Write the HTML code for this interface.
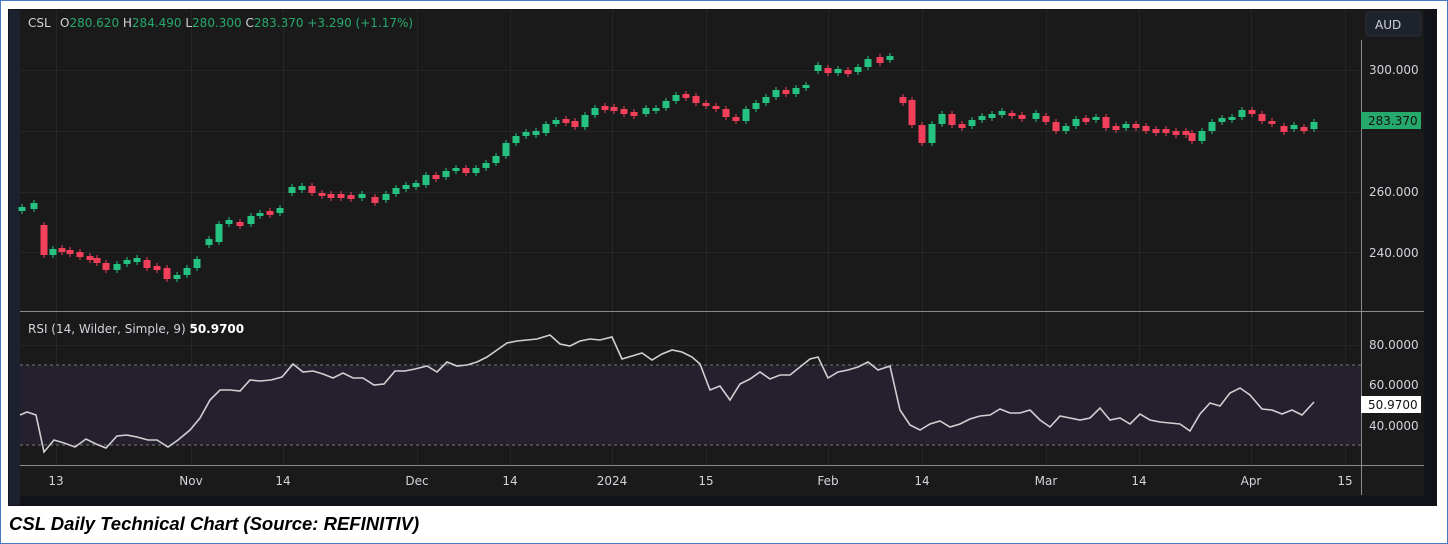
<!DOCTYPE html>
<html><head><meta charset="utf-8"><style>
html,body{margin:0;padding:0;background:#fff}
body{width:1448px;height:544px;position:relative;overflow:hidden;font-family:"Liberation Sans",sans-serif}
.frame{position:absolute;left:0;top:0;width:1446px;height:542px;border:1px solid #4a78c8}
.chart{position:absolute;left:8px;top:9px;width:1429px;height:497px;background:#121318}
.cap{position:absolute;left:9px;top:513px;font-size:18.5px;font-weight:bold;font-style:italic;color:#000;font-family:"Liberation Sans",sans-serif}
svg text{font-family:"DejaVu Sans","Liberation Sans",sans-serif;font-size:12px}
</style></head><body>
<div class="frame"></div>
<div class="chart"></div>
<svg id="s" width="1448" height="544" style="position:absolute;left:0;top:0">
<rect x="20" y="10" width="1404" height="486" fill="#1a1a1a"/>
<rect x="9" y="10" width="11" height="495" fill="#1c2130"/>
<g id="grid" stroke="#262626" stroke-width="1"></g>
<rect x="20" y="365" width="1341" height="80" fill="#251f2e"/>
<line x1="20" y1="365" x2="1361" y2="365" stroke="#777" stroke-dasharray="3,3"/>
<line x1="20" y1="445" x2="1361" y2="445" stroke="#777" stroke-dasharray="3,3"/>
<line x1="20" y1="311.5" x2="1424" y2="311.5" stroke="#8a8a8a"/>
<line x1="20" y1="465.5" x2="1424" y2="465.5" stroke="#8a8a8a"/>
<line x1="1361.5" y1="40" x2="1361.5" y2="495" stroke="#8a8a8a"/>
<g id="candles"></g>
<polyline id="rsi" fill="none" stroke="#d0d0d0" stroke-width="1.6"/>
<text x="28" y="27" fill="#d1d4dc">CSL</text>
<text x="60" y="27" fill="#d1d4dc">O<tspan fill="#26a96c">280.620</tspan>  H<tspan fill="#26a96c">284.490</tspan>  L<tspan fill="#26a96c">280.300</tspan>  C<tspan fill="#26a96c">283.370</tspan>  <tspan fill="#26a96c">+3.290 (+1.17%)</tspan></text>
<text x="28" y="333" fill="#d1d4dc">RSI (14, Wilder, Simple, 9)  <tspan fill="#fff" font-weight="bold">50.9700</tspan></text>
<rect x="1366" y="12" width="55" height="24" rx="3" fill="#1e222d" stroke="#2a2e39"/>
<text x="1375" y="29" fill="#d1d4dc">AUD</text>
<g fill="#d1d4dc">
<text x="1369" y="74">300.000</text>
<text x="1369" y="196">260.000</text>
<text x="1369" y="257">240.000</text>
<text x="1369" y="349">80.0000</text>
<text x="1369" y="389">60.0000</text>
<text x="1369" y="430">40.0000</text>
</g>
<rect x="1361" y="112" width="60" height="17" fill="#26a96c"/>
<text x="1368" y="125" fill="#111">283.370</text>
<rect x="1361" y="396" width="60" height="17" fill="#fff"/>
<text x="1368" y="409" fill="#111">50.9700</text>
<g id="tl" fill="#d1d4dc"></g>
</svg>
<div class="cap">CSL Daily Technical Chart (Source: REFINITIV)</div>
<script>
(function(){
var ns="http://www.w3.org/2000/svg";
function el(p,n,a){var e=document.createElementNS(ns,n);for(var k in a)e.setAttribute(k,a[k]);p.appendChild(e);return e}
var g=document.getElementById('grid');
[56,191,283,417,510,612,706,828,922,1046,1139,1251,1345].forEach(function(x){el(g,'line',{x1:x+.5,y1:10,x2:x+.5,y2:465})});
[70,131,192,252,345,385,425].forEach(function(y){el(g,'line',{x1:20,y1:y+.5,x2:1361,y2:y+.5})});
var tl=document.getElementById('tl');
[[56,'13'],[191,'Nov'],[283,'14'],[417,'Dec'],[510,'14'],[612,'2024'],[706,'15'],[828,'Feb'],[922,'14'],[1046,'Mar'],[1139,'14'],[1251,'Apr'],[1345,'15']].forEach(function(t){var e=el(tl,'text',{x:t[0],y:485,'text-anchor':'middle'});e.textContent=t[1]});
var c=[[22,207],[34,206],[44,255],[53,249],[62,250],[70,252],[80,257],[90,258],[97,263],[106,270],[117,264],[127,262],[137,260],[147,268],[157,268],[167,279],[177,275],[187,268],[197,259],[209,242],[219,224],[229,222],[240,224],[251,216],[260,213],[270,213],[280,208],[292,190],[302,186],[312,193],[322,196],[331,196],[341,196],[351,197],[362,196],[375,200],[386,194],[396,188],[406,187],[416,185],[426,175],[436,177],[446,171],[456,168],[466,173],[476,168],[486,163],[496,156],[506,143],[516,136],[526,134],[536,133],[546,124],[556,120],[566,121],[575,127],[585,115],[595,108],[605,108],[614,109],[624,114],[634,114],[646,111],[656,108],[666,101],[676,95],[686,96],[696,103],[706,106],[716,109],[726,117],[736,121],[746,109],[756,103],[766,97],[776,90],[786,94],[796,88],[806,85],[818,68],[828,73],[838,71],[848,72],[858,67],[868,59],[880,60],[890,58],[903,100],[912,125],[922,143],[932,124],[942,114],[952,125],[962,126],[972,120],[982,118],[992,114],[1002,113],[1012,116],[1022,117],[1036,116],[1046,122],[1056,131],[1066,126],[1076,119],[1086,120],[1096,117],[1106,128],[1116,128],[1126,124],[1136,126],[1146,131],[1156,131],[1166,131],[1176,133],[1186,133],[1192,141],[1202,131],[1212,122],[1222,120],[1232,117],[1242,110],[1252,114],[1262,121],[1272,124],[1284,129],[1294,127],[1304,129],[1314,122]];
var cg=document.getElementById('candles');
for(var i=0;i<c.length;i++){var x=c[i][0],y=c[i][1],py=i?c[i-1][1]:y+4;var up=y<py;var col=up?'#26c281':'#f23f5a';var t1=Math.min(y,py),b1=Math.max(y,py);if(b1-t1<3){t1=y-2;b1=y+2}if(i&&Math.abs(x-c[i-1][0])>11){t1=y-3;b1=y+3}if(b1-t1>30){t1=y-(up?0:30);b1=t1+30}
el(cg,'line',{x1:x,y1:t1-3,x2:x,y2:b1+3,stroke:col,'stroke-width':1});el(cg,'rect',{x:x-3.5,y:t1,width:7,height:b1-t1,fill:col});}
var r="20,415 27,412 36,415 44,452 54,440 64,443 75,447 86,439 96,444 106,448 117,436 127,435 137,437 148,440 157,440 168,447 178,440 190,430 200,418 210,400 220,390 230,390 240,391 250,380 260,381 271,380 282,377 293,364 303,372 313,371 323,374 333,378 343,373 353,378 363,378 374,385 384,384 395,371 405,371 415,369 427,366 437,372 447,362 457,366 467,365 477,362 487,357 497,350 507,343 517,341 527,340 537,339 550,335 560,344 570,346 580,341 590,339 600,340 612,337 622,359 632,356 642,353 652,360 662,354 672,350 682,352 692,357 700,364 710,390 720,386 730,400 740,384 750,379 760,372 770,379 780,375 790,375 800,367 810,359 818,357 828,378 838,372 848,370 858,367 868,362 878,370 890,366 900,410 910,425 920,430 930,424 940,421 950,427 960,424 970,419 980,416 990,415 1000,409 1010,413 1020,413 1030,410 1040,420 1050,427 1060,416 1070,418 1080,420 1090,418 1100,408 1110,420 1120,418 1130,424 1140,414 1150,420 1160,422 1170,423 1180,424 1190,431 1200,414 1210,403 1220,406 1230,393 1240,388 1250,395 1262,409 1272,410 1282,414 1292,410 1302,415 1314,402";
document.getElementById('rsi').setAttribute('points',r);
})();
</script>
</body></html>
